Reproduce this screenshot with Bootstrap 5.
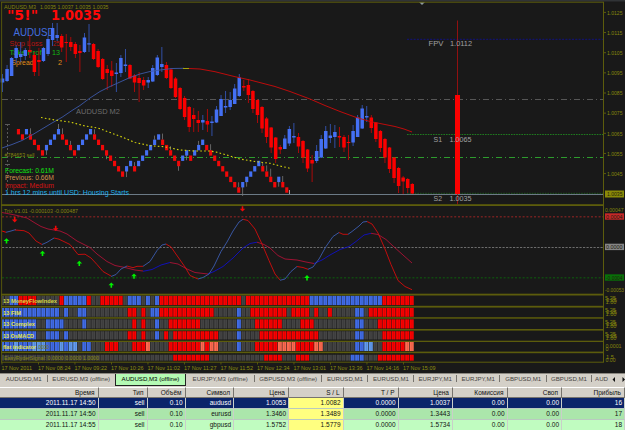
<!DOCTYPE html>
<html lang="ru">
<head>
  <meta charset="UTF-8">
  <title>AUDUSD,M3</title>
  <meta name="viewport" content="width=device-width, initial-scale=1">
  <link rel="stylesheet" href="https://cdn.jsdelivr.net/npm/bootstrap@5.3.3/dist/css/bootstrap.min.css">
  <style>
    body {
      width: 625px;
      height: 430px;
      background: #191919;
      font-family: "Liberation Sans", Arial, sans-serif;
      font-size: 6.5px;
      line-height: 1;
    }

    #chart {
      width: 625px;
      height: 373px;
      flex: none;
    }

    .chart-tabs {
      height: 14px;
      flex: none;
      background: #d4d0c8;
      border-top: 1px solid #8a8780;
      color: #45433f;
      font-size: 6.1px;
      white-space: nowrap;
    }

    .chart-tab {
      flex: none;
      height: 10px;
      position: relative;
    }

    .chart-tab:not(.current)::after {
      content: "";
      position: absolute;
      right: 0;
      top: 1px;
      height: 7px;
      border-right: 1px solid #77746e;
    }

    .chart-tab.no-line::after {
      display: none;
    }

    .chart-tab.current {
      height: 12px;
      background: #b4fab4;
      border: 1px solid #222;
      border-top: 0;
      color: #000;
    }

    .orders {
      table-layout: fixed;
      width: 625px;
      border-collapse: separate;
      border-spacing: 0;
      text-align: right;
      color: #111;
    }

    .orders th {
      height: 11px;
      padding: 1px 3px 0 0;
      font-weight: 400;
      background: #d4d0c8;
      border-top: 1px solid #fff;
      border-right: 1px solid #77746e;
      border-bottom: 1px solid #77746e;
    }

    .orders td {
      height: 11px;
      padding: 1px 2px 0 0;
      border-right: 1px solid #c9cfc9;
      border-bottom: 1px solid #b9c9c0;
    }

    .orders .picked td { background: #0a246a; color: #fff; }
    .orders .even td { background: #abe6ab; }
    .orders .odd td { background: #c0fcc0; }
    .orders tr td.stop { background: #ffff80; color: #111; }
  </style>
</head>
<body class="d-flex flex-column overflow-hidden">

<svg id="chart" viewBox="0 0 625 373" font-family="Liberation Sans, Arial, sans-serif"></svg>

<nav class="chart-tabs d-flex overflow-hidden" id="tabs"></nav>

<table class="orders" id="orders">
  <colgroup id="cols"></colgroup>
  <thead>
    <tr>
      <th>Время</th><th>Тип</th><th>Объём</th><th>Символ</th><th>Цена</th><th>S / L</th>
      <th>T / P</th><th>Цена</th><th>Комиссия</th><th>Своп</th><th>Прибыль</th>
    </tr>
  </thead>
  <tbody>
    <tr class="picked">
      <td>2011.11.17 14:50</td><td>sell</td><td>0.10</td><td>audusd</td><td>1.0053</td><td class="stop">1.0082</td>
      <td>0.0000</td><td>1.0037</td><td>0.00</td><td>0.00</td><td>16</td>
    </tr>
    <tr class="even">
      <td>2011.11.17 14:50</td><td>sell</td><td>0.10</td><td>eurusd</td><td>1.3460</td><td class="stop">1.3489</td>
      <td>0.0000</td><td>1.3443</td><td>0.00</td><td>0.00</td><td>17</td>
    </tr>
    <tr class="odd">
      <td>2011.11.17 14:55</td><td>sell</td><td>0.10</td><td>gbpusd</td><td>1.5752</td><td class="stop">1.5779</td>
      <td>0.0000</td><td>1.5734</td><td>0.00</td><td>0.00</td><td>18</td>
    </tr>
  </tbody>
</table>

<script src="https://cdn.jsdelivr.net/npm/bootstrap@5.3.3/dist/js/bootstrap.bundle.min.js"></script>
<script>
const BLUE = "#4470f4", RED = "#fb0000", OLIVE = "#5c5c0c", GOLD = "#85850c";
const out = [];

function rect(x, y, w, h, fill) {
  out.push(`<rect x="${x}" y="${y}" width="${w}" height="${h}" fill="${fill}"/>`);
}
function line(x1, y1, x2, y2, stroke, dash = "", w = 1) {
  out.push(`<line x1="${x1}" y1="${y1}" x2="${x2}" y2="${y2}" stroke="${stroke}" stroke-width="${w}" stroke-dasharray="${dash}"/>`);
}
// w is the drawn width of the string
function text(s, x, y, size, fill, w, weight = 400, family = "Liberation Sans, Arial, sans-serif") {
  out.push(`<text x="${x}" y="${y}" font-size="${size}" fill="${fill}" textLength="${w}" lengthAdjust="spacingAndGlyphs" font-weight="${weight}" font-family="${family}">${s}</text>`);
}
function curve(points, stroke, dash = "", w = 0.9) {
  out.push(`<polyline points="${points}" fill="none" stroke="${stroke}" stroke-width="${w}" stroke-dasharray="${dash}" stroke-linejoin="round"/>`);
}

rect(0, 0, 625, 373, "#191919");
rect(0, 0, 625, 1.5, "#303336");

// price levels
line(2, 99.5, 603, 99.5, "#565656", "6 3 1 3");
line(407, 39.3, 603, 39.3, "#11117e", "2 1.3");
line(407, 134.5, 603, 134.5, "#1f7a1f", "1.6 1");
line(2, 157.5, 603, 157.5, "#2d9c2d", "6 3 1 3");
line(2, 194.5, 603, 194.5, "#6c7a86");
line(407, 193.3, 603, 193.3, "#1f701f", "1.6 1", 0.7);
line(7.5, 124, 7.5, 196, "#5a5a5a", "2 2");
line(5, 124.5, 10, 124.5, "#5a5a5a");
line(5, 164.5, 10, 164.5, "#5a5a5a");

// header labels
text("AUDUSD,M3", 4, 8.5, 6, GOLD, 32);
text("1.0035 1.0037 1.0035 1.0035", 40, 8.5, 6, GOLD, 68.5);
text("AUDUSD", 13.5, 35.7, 10.5, "#4470e0", 41);
text("Stop Loss", 9.5, 45.6, 7.3, "#b81414", 33);
text("25", 53, 45.6, 7.3, "#b81414", 7);
text("Take Prof", 9.5, 55.3, 7.3, "#12b812", 32);
text("13", 52, 55.3, 7.3, "#12b812", 8);
text("Spread", 11.5, 65, 7.3, "#e08e1a", 22);
text("2", 58, 65, 7.5, "#e08e1a", 4);
text("AUDUSD M2", 76, 114, 7.8, "#6c6c6c", 44);
text("#784653 sell", 4.5, 156.6, 5.6, "#85850c", 30);

// [high, body top, body bottom, low, up?]
const main = [
  [74,78.5,82.5,92,1],[65,69,81,82,1],[57,58,76,76,1],[45,48,58,63,1],[42,54,57,62,1],[48,50,56,60,1],[35,50,52,58,0],[52,55,72,76,0],[48,60,62,76,0],
  [47,48,61,62,1],[36,39,54,56,1],[23,28,40,46,1],[23,35,38,41,1],[34,36,47.5,52,0],[34,42,43,62,0],[37,42,47,51,0],[42,44,54,58,0],[45,51,53,72,0],[33,37.5,52,53,1],
  [24,43.3,44.5,52,1],[43,44,59,60,0],[49,51,67,68,0],[58,59,79,80,0],[65,69,73,90,0],[61,70.5,76,87,0],[63,72.5,74,92,1],[55,58,73,77,1],[49,64.5,66,72,1],[64,65,78.5,79,0],
  [74,75.5,82.5,92,0],[72,78,83,102,0],[77,80,85.5,90,0],[77,80,82.5,88,1],[65,68,81.5,82,1],[55,57.5,75,76,1],[47,64,67,72,1],[62,65,78,79,0],[68,69.5,88,89,0],[77,78.5,97,98,0],[87,88,109,110,0],
  [96,98,117,120,0],[106,107,127,132,0],[108,115,119,132,0],[111,120,123,132,0],[115,120,122.5,130,1],[109,121,124.5,132,0],
  [116,121.5,123,136,1],[106,109.5,122.5,123,1],[95,99,116,116,1],[91,106,107.5,113,1],[92,100,107,110,1],[84,88.5,104,104,1],[74,77.5,96,97,1],[80,86,87.5,91,0],[79,85,95,103,0],
  [90,91,109,113,0],[99,100,115,123,0],[106,107,128.5,133,0],[117,118.5,137,143,0],[127,127.5,147.5,153,0],[137,137.5,159,163,0],[145,147,149.5,154,0],[135,138.5,149,149,1],[126,129,143.5,146,1],[123,136,137.5,143,1],
  [133,137,146.5,153,0],[140,141,157.5,163,0],[149,149.5,168.5,172,0],[155,160,163.5,182,0],[145,151,161,163,1],[135,139,157.5,158,1],[126,131,148.5,149,1],[124,135.5,138,143,1],[125,132,137,148,1],
  [127,136,137.5,147,0],[135,137,147.5,152,0],[135,142,143,160,0],[125,131,142.5,146,1],[115,117.5,137,137,1],[105,108.5,128.5,129,1],[106,116,117.5,122,1],[115,117.5,128,133,0],
  [122,122.5,139,142,0],[130,131,148,152,0],[138,139,157.5,163,0],[147,147.5,169,173,0],[157,157.5,178,183,0],[167,168,186,193,0],[176,177.5,181.5,194,0],[178,179,188,193,0],[183,184,193.5,194,0]
];
main.forEach(([hi, top, bot, lo, up], i) => {
  const x = 2.5 + i * 4.553;
  rect((x - 0.45).toFixed(2), hi, 0.9, lo - hi, up ? "#3455b4" : "#b80808");
  rect((x - 1.75).toFixed(2), top, 3.5, bot - top, up ? BLUE : RED);
});

// two-minute series in equal steps, r down / b up
const steps = "r0 r1 b0 r1 r2 r3 r4 b3 b2 b1 b0 r1 r2 r3 r4 b3 b2 b1 b0 r1 r2 r3 r4 r5 r6 r7 r8 b7 b6 r7 b6 b5 b4 b3 b2 b1 b0 r2 r3 r4 r5 r6 b5 b4 r5 b4 b3 b2 r3 r4 r5 r6 r7 r8 r9 r10 r11 b10 b9 b8 b7 b6 r7 r8 r9 r10 b9 r10 r11".split(" ");
steps.splice(36, 1);
const wicks = { 3: -6, 7: 5, 10: -5, 11: -6, 13: -4, 19: -5, 22: 4, 27: 6, 29: -4, 34: -4, 36: -6, 38: -4, 40: 5, 42: 5, 45: -4, 48: -6, 55: -5, 56: 9, 57: 5, 61: -4, 62: -6, 63: -8, 65: 5, 66: -6 };
const lvl = n => 129 + n * 5.3;
steps.forEach((s, i) => {
  const x = 18.4 + i * 4.005, y = lvl(+s.slice(1));
  if (wicks[i] < 0) rect(x - 0.4, y + wicks[i], 0.8, -wicks[i], "#777");
  if (wicks[i] > 0) rect(x - 0.4, y + 5, 0.8, wicks[i], "#777");
  rect((x - 1.5).toFixed(2), y.toFixed(2), 3.1, 5.4, s[0] === "b" ? BLUE : "#f00808");
});
line(289.5, 190, 289.5, 194, "#999");

// moving averages
curve("2,148 12,144.5 22,140.5 32,135 42,129 52,123 62,117.3 72,110.5 80,105.5 90,98 100,91.5 110,86.5 120,82 130,77.5 140,74 150,71.5 160,70 172,68.5 184,68.3", "#3c58a8");
line(183, 68.5, 189, 68.5, "#a5a50a");
curve("189,68.5 200,69 215,71.7 235,76.7 250,80 275,86.5 290,91.5 310,99 325,105.5 340,111.5 355,117 370,121.5 380,123.5 395,126.5 404,129 412,132", "#cf0a0a");
curve("41,117.5 55,120 70,122 85,126 98,128 110,132.5 122,137 135,142.5 150,145.7 165,146.8 180,150 195,151 210,151 218,152.5 230,156 240,159 255,161.5 270,163.3 280,166 291,168.5", "#d6d60c", "1.6 2.3", 1.1);

text("Forecast: 0.61M", 5, 172.8, 7.3, "#12e012", 49);
text("Previous: 0.66M", 5, 180.2, 7.3, "#d0924f", 49);
text("Impact: Medium", 5, 187.7, 7.3, "#d41414", 49);
text("1 hrs 12 mins until USD: Housing Starts", 5, 195, 7.3, "#1fb0ec", 124);
text("\"5!\"", 7, 20, 13.4, "#ff0808", 31, 700, "DejaVu Sans, sans-serif");
text("1.0035", 51, 20, 13.4, "#ff0808", 50, 700, "DejaVu Sans, sans-serif");

// daily candle and pivots
rect(457, 20.5, 0.9, 184, "#a01010");
rect(455, 95, 5, 99, RED);
out.push('<path d="M419 2h6l-3 3z" fill="#8d99a0"/>');
text("FPV", 428.5, 46, 7.3, "#a0a0a0", 15);
text("1.0112", 450, 46, 7.3, "#a0a0a0", 22);
text("S1", 433.5, 141.7, 7.3, "#a0a0a0", 8.5);
text("1.0065", 449.5, 141.7, 7.3, "#a0a0a0", 22);
text("S2", 433.5, 200.9, 7.3, "#a0a0a0", 8.5);
text("1.0035", 449.5, 200.9, 7.3, "#a0a0a0", 22);

// price axis
["1.0125","1.0115","1.0105","1.0095","1.0085","1.0075","1.0065","1.0055","1.0045"].forEach((p, i) => {
  const y = 12.4 + i * 20.15;
  line(603, y, 606, y, OLIVE);
  text(p, 607, y + 2.2, 5.8, "#85850c", 15.5);
});
rect(605, 190.5, 19, 7, "#8a8a08");
text("1.0035", 607, 196.2, 5.8, "#24240a", 15.5);

// Trix panel
line(2, 216.7, 603, 216.7, "#702020", "2 1.8", 1.5);
line(2, 247.5, 603, 247.5, "#6c6c6c", "2.2 1.3");
line(2, 277.8, 603, 277.8, "#104810", "2 1.8", 1.5);
text("Trix V1.01 -0.000103 -0.000487", 4, 213.4, 6, GOLD, 74);
curve("2,212.5 15,215 27,218 35,223 41,226.5 48,229 60,231 67,234 77,241 90,247.5 97,254 107,261.5 115,265.5 125,267.5 135,270 143,271", "#ad1236");
curve("143,271.3 152,269.5 161,265 170,262.5", "#1010c8");
curve("170,262.5 178,264 187,269 195,272.5 208,274", "#ad1236");
curve("208,274 214,271.5 223,266.5 233,258 243,248 250,243.5 257,242.2", "#1010c8");
curve("257,242.2 264,244.5 270,248 278,255.5 285,259 297,260 306,262 314,263.5", "#ad1236");
curve("314,263.5 322,260 330,255 340,249.5 349,246.5 356,241.5 364,235 371,233.3", "#1010c8");
curve("371,233.3 378,234.5 386,239.5 393,246 403,255 412,263", "#ad1236");

curve("6,232.3 11,231 16,229.5", "#3c5cb0");
curve("2,231 6,232.3", RED);
curve("15,230 24,230.7 29,233 36,241 42,244.5", "#d40c0c");
curve("42,244.5 47,242.3 54,238", "#3c5cb0");
curve("54,238 59,239.2 70,244.5 78,254.5 85,254.2 91,258 97,264.5 103,271.5 111,276", "#d40c0c");
curve("111,276.5 116,274.5 121,269 127,266", "#3c5cb0");
curve("127,266 133,267.7 137,266.3 143,266.3", "#d40c0c");
curve("143,266.3 150,261.5 157,250.5 162,245 166,244", "#3c5cb0");
curve("166,244 171,247 178,257 185,267 190,275.5 198,279", "#d40c0c");
curve("198,279 203,277.5 209,274 214,266 221,251.5 227,242 233,231 239,222 243,219.3", "#3c5cb0");
curve("243,219.3 248,220.5 255,229 262,244 269,260.5 275,274 280,280", "#d40c0c");
curve("280,280.3 285,279 291,271.5 297,266.5", "#3c5cb0");
curve("297,266.5 303,267.5 308,269.3", "#d40c0c");
curve("308,269.3 313,267 319,259 326,246.5 333,236.5 339,232.5", "#3c5cb0");
curve("339,232.5 343,234.3 348,234.3", "#d40c0c");
curve("348,234.3 352,231.5 359,226 363,222 367,221.5", "#3c5cb0");
curve("367,221.5 372,224 378,233 385,249 391,264.5 398,280.5 405,286.5 412,289.7", "#d40c0c");

function arrow(x, y, up) {
  const d = up ? "M0 -2.6L2.8 0.3H0.8V2.7H-0.8V0.3H-2.8z" : "M0 2.6L2.8 -0.3H0.8V-2.7H-0.8V-0.3H-2.8z";
  out.push(`<path transform="translate(${x} ${y})" d="${d}" fill="${up ? "#00f000" : "#f00808"}"/>`);
}
[[6.5,240.8],[42.5,253.3],[79.3,263.3],[111.3,285],[134,276],[307,277.7]].forEach(a => arrow(...a, true));
[[14.7,219.8],[55.7,228.5],[242.5,209]].forEach(a => arrow(...a, false));

text("0.00047", 605, 211.6, 5.4, "#85850c", 18.5);
text("-0.00053", 605, 292, 4.8, "#85850c", 19);
[["0.0004", 213.3, "#c62828"], ["0.0000", 243.7, "#858585"], ["-0.0004", 274.3, "#087008"]].forEach(([s, y, c]) => {
  rect(605, y, 19, 6.4, c);
  text(s, 606, y + 5.2, 5.2, "#20200f", 16.5);
});

// signal strips: colour + number of bars
const paint = { g: "#444444", b: "#416ce6", r: "#fb0000", l: "#629bee", s: "#ff6a50" };
const strips = [
  [295.8, 9.3, "g2 b2 r4 g5 r1 b5 r1 g2 r5 g1 b3 g1 b1 g1 b1 r18 g1 r14 b16 r7"],
  [308, 8.8, "b13 g1 b1 g2 b2 g9 r2 g1 r1 g1 b2 r12 g5 b1 g2 r8 g1 r4 g1 r1 g2 r1 g5 b2 g1 r10"],
  [319.3, 9.2, "b8 g2 b4 g4 b1 g10 r1 g1 r1 g2 b1 g2 r7 g8 b1 g3 r6 g4 r3 g9 b2 g3 r8"],
  [331.2, 8.3, "b8 g2 b3 g1 b1 g13 r2 g1 r1 g2 b1 g1 r1 g1 r10 g4 b1 g4 r13 g8 b2 g4 r7"],
  [341.7, 9.3, "b3 l1 b3 l3 b3 l1 b1 l2 g1 b2 g3 r3 g3 r3 s1 g4 r7 s1 r1 s2 g4 b1 g3 r5 s4 r4 s2 g7 b2 l2 g2 r5 s2"],
  [354.7, 6, "g38 r8 g12 r4 g3 r3 g9 b3 g3 r8"]
];
strips.forEach(([y, h, runs]) => {
  let i = 0;
  runs.split(" ").forEach(run => {
    for (let n = +run.slice(1); n > 0; n--, i++) {
      rect((1 + i * 4.548 - (i ? 0.6 : -1)).toFixed(2), y, i ? 4 : 2.3, h, paint[run[0]]);
    }
  });
});
// darker seam inside every bar
for (let i = 1; i < 91; i++) rect((2.4 + i * 4.548).toFixed(2), 295.5, 0.5, 65.5, "rgba(0,0,0,.2)");

// panel frames
[[204.2, 1.8], [293.7, 1.8], [305.8, 1.8], [317.2, 1.5], [329, 1.6], [340.7, 1.3], [351.6, 1.6], [361.7, 1]].forEach(([y, h]) => rect(1, y, 603, h, OLIVE));
rect(1, 1.7, 603, 1, OLIVE);
rect(1.2, 2, 0.9, 360, OLIVE);
rect(603, 2, 1, 360, OLIVE);

text("13 MoneyFlowIndex", 3, 302.8, 6, "#d8d840", 54, 700);
text("13 FIM", 3, 314.6, 6, "#e4e44a", 18, 700);
text("13 Complex", 3, 326.2, 6, "#e4e44a", 32, 700);
text("13 OsMACD", 3, 337.8, 6, "#e4e44a", 31, 700);
text("flat indicator", 3, 348.8, 6, "#e4e44a", 33, 700);
text(".0000", 37, 348.8, 6, "#77770a", 12);
text("EasyRyderSignal: 0.0000 0.0000 1.0000", 4, 360.2, 6, "#85850c", 95);

[300, 312, 324, 335.5].forEach(y => {
  text("5.25", 605, y, 5.2, "#85850c", 11);
  text("3.25", 606, y + 2.2, 5.2, "#85850c", 11);
  text("1.00", 605.5, y + 4.2, 5.2, "#85850c", 11);
});
text("0.0001", 605.5, 347.5, 5.6, "#85850c", 16);
text("0", 605.5, 350.5, 5.2, "#85850c", 3);
text("1.5", 606, 358.5, 5.2, "#85850c", 8);
text("0.00", 605.5, 361.5, 5.2, "#85850c", 10);

["17 Nov 2011","17 Nov 08:24","17 Nov 09:22","17 Nov 10:26","17 Nov 11:02","17 Nov 11:27","17 Nov 11:52","17 Nov 12:34","17 Nov 13:01","17 Nov 13:36","17 Nov 14:16","17 Nov 15:09"].forEach((t, i) => {
  const x = 1.5 + i * 36.5;
  rect(x, 362, 0.9, 2.5, OLIVE);
  text(t, x, 369.8, 6, "#8d8d10", i ? 32.5 : 30.5);
});
document.getElementById("chart").innerHTML = out.join("");

const tabs = [["AUDUSD,M1",47.5],["EURUSD,M3 (offline)",67.5],["AUDUSD,M3 (offline)",71],["EURJPY,M3 (offline)",68.5],["GBPUSD,M3 (offline)",67.5],["EURUSD,M1",46],["EURUSD,M1",46],["EURJPY,M1",42.5],["EURJPY,M1",43.5],["GBPUSD,M1",46.5],["GBPUSD,M1",45],["AUD",20]];
document.getElementById("tabs").innerHTML = tabs.map(([name, w], i) =>
  `<div class="chart-tab d-flex align-items-center justify-content-center ${i === 2 ? "current" : ""} ${i === 1 || i === 11 ? "no-line" : ""}" style="width:${w}px">${name}</div>`
).join("") + '<svg width="14" height="10" fill="#111"><path d="M3 3v5L0.5 5.5zM10.5 3v5L13 5.5z"/></svg>';

const cols = [98.5, 49, 38, 48.5, 55, 54.5, 55, 54.5, 54.5, 54.5, 63];
document.getElementById("cols").innerHTML = cols.map(w => `<col style="width:${w}px">`).join("");
</script>

</body>
</html>
